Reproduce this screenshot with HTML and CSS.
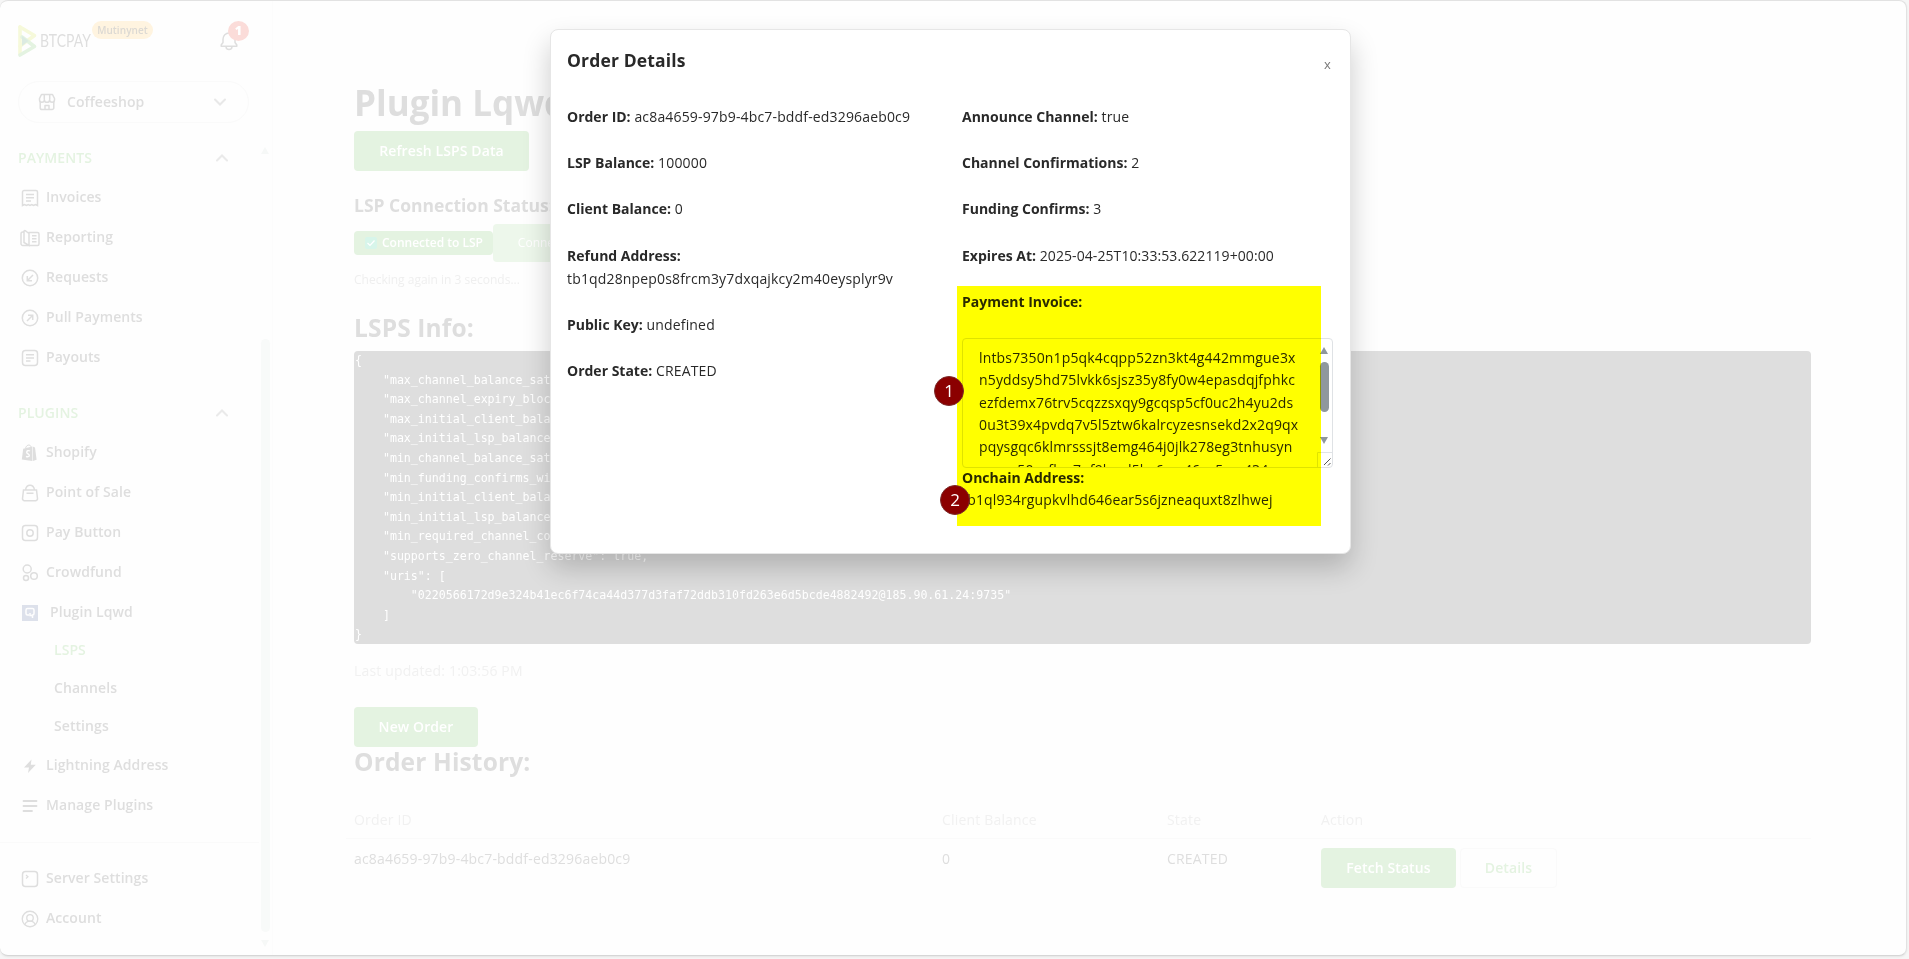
FILE: index.html
```
<!DOCTYPE html>
<html lang="en">
<head>
<meta charset="utf-8">
<title>Plugin Lqwd</title>
<link rel="stylesheet" href="styles.css">
</head>
<body>
<div class="window">
  <aside class="sidebar">
    <header class="brand">
      <svg class="logo" width="75" height="34" viewBox="0 0 75 34" fill="none">
        <path d="M2 3v27" stroke="#f6f9da" stroke-width="3.6" stroke-linecap="round"/>
        <path d="M2 3l14.5 8.500L2 22" stroke="#f6f9da" stroke-width="3.600" stroke-linecap="round" stroke-linejoin="round"/>
        <path d="M4 13l12.500 9.500L2 31" stroke="#e4f3e1" stroke-width="3.600" stroke-linecap="round" stroke-linejoin="round"/>
        <path d="M4 12v10l6.500-5z" fill="#dcebe2"/>
        <text class="logo-text" x="22" y="23.200" textLength="51" lengthAdjust="spacingAndGlyphs">BTCPAY</text>
      </svg>
      <span class="net">Mutinynet</span>
      <span class="bell">
        <svg width="18" height="20" viewBox="0 0 18 20" fill="none" stroke="#dedede" stroke-width="1.500" stroke-linejoin="round"><path d="M1.200 15.200V14L3 11.500V8a6 6 0 0 1 12 0v3.500l1.800 2.500v1.200z"/><path d="M6 15.500a3 3 0 0 0 6 0"/></svg>
        <b class="count">1</b>
      </span>
    </header>
    <div class="store">
      <svg width="18" height="18" viewBox="0 0 18 18" fill="none" stroke="#dedede" stroke-width="1.500" stroke-linejoin="round"><path d="M3.500 1.500h11l2 4v1.200a2.200 2.200 0 0 1-4.900 0 2.600 2.600 0 0 1-5.200 0 2.200 2.200 0 0 1-4.900 0V5.500z"/><path d="M6.300 1.500v5M11.700 1.500v5M2.200 8.500v6.200a1.800 1.800 0 0 0 1.800 1.800h10a1.800 1.800 0 0 0 1.800-1.800V8.500M7 16.500v-4h4v4"/></svg>
      <span>Coffeeshop</span>
      <svg class="chev" width="14" height="8" viewBox="0 0 14 8" fill="none" stroke="#e8e8e8" stroke-width="2" stroke-linecap="round"><path d="M2 1.500l5 5 5-5"/></svg>
    </div>
    <div class="menu">
      <div class="group first"><span>PAYMENTS</span><svg width="14" height="8" viewBox="0 0 14 8" fill="none" stroke="#eaeaea" stroke-width="2" stroke-linecap="round"><path d="M2 6.500l5-5 5 5"/></svg></div>
      <a class="item"><svg class="ic" viewBox="0 0 18 18"><path d="M1.500 16.500V3a1.500 1.500 0 0 1 1.500-1.500h12A1.500 1.500 0 0 1 16.500 3v13.500l-2-1-2 1-1.800-1-1.700 1-1.800-1-1.700 1-2-1zM5 5.500h8M5 8.700h8M5 12h5"/></svg>Invoices</a>
      <a class="item"><svg class="ic wide" viewBox="0 0 20 18"><path d="M9 16.500H3A1.800 1.800 0 0 1 1 14.700V4.800A1.800 1.800 0 0 1 2.800 3H4M4 3v10.500l5 3V4.500L5.200 1.600A.8.8 0 0 0 4 2.200zM9 16.500h8.500a1.500 1.500 0 0 0 1.500-1.500V5a1.500 1.500 0 0 0-1.500-1.500H8.500M12 6.700h4.500M12 9.700h4.500M12 12.700h4.500"/></svg>Reporting</a>
      <a class="item"><svg class="ic" viewBox="0 0 18 18"><circle cx="9" cy="9" r="7.700"/><path d="M12 6l-5.500 5.500M6.300 7v4.700H11"/></svg>Requests</a>
      <a class="item"><svg class="ic" viewBox="0 0 18 18"><circle cx="9" cy="9" r="7.700"/><path d="M6 12l5.500-5.500M7 6.300h4.700V11"/></svg>Pull Payments</a>
      <a class="item"><svg class="ic" viewBox="0 0 18 18"><rect x="1.500" y="1.500" width="15" height="15" rx="3"/><path d="M5 5.800h8M5 9h8M5 12h4.500"/></svg>Payouts</a>
      <div class="group"><span>PLUGINS</span><svg width="14" height="8" viewBox="0 0 14 8" fill="none" stroke="#eaeaea" stroke-width="2" stroke-linecap="round"><path d="M2 6.500l5-5 5 5"/></svg></div>
      <a class="item"><svg class="ic" viewBox="0 0 18 18"><path d="M2.200 4.800l9-2.300V17L.8 15.600zM11.800 2.600l2.200 1 1.600 12.200-3.800 1.100z" fill="#dedede" stroke="none"/><path d="M4.500 4.500C5 2 6.500 1 8 1s2 1.500 2 2.500" stroke-width="1"/><path d="M9 7c-1.500-.8-3.300-.2-3.300 1.200 0 1.600 2.600 1.600 2.600 3.200 0 1.400-1.700 1.700-3.300.9" stroke="#fefefe" stroke-width="1.400"/></svg>Shopify</a>
      <a class="item"><svg class="ic" viewBox="0 0 18 18"><path d="M2.500 6h13l1 8.500a2 2 0 0 1-2 2.200h-11a2 2 0 0 1-2-2.200zM4.500 6C5 3 6.800 1.300 9 1.300S13 3 13.500 6M5.500 9.200h7"/></svg>Point of Sale</a>
      <a class="item"><svg class="ic" viewBox="0 0 18 18"><rect x="1.500" y="1.500" width="15" height="15" rx="3"/><circle cx="9" cy="9" r="3.200"/></svg>Pay Button</a>
      <a class="item"><svg class="ic" viewBox="0 0 18 18"><circle cx="6.200" cy="5" r="4"/><circle cx="13" cy="12" r="3.300"/><circle cx="5" cy="14" r="2.500"/></svg>Crowdfund</a>
      <a class="item lq"><svg class="ic" viewBox="0 0 16 16"><path d="M0 0h16v16H0z" fill="#dde1eb" stroke="none"/><path d="M7 10H5.500A1.500 1.500 0 0 1 4 8.500V5a1.500 1.500 0 0 1 1.500-1.500h5A1.500 1.500 0 0 1 12 5v3.500a1.500 1.500 0 0 1-1.500 1.500V13M8 8v2.500h2.500" stroke="#fefefe" stroke-width="1.500"/></svg>Plugin Lqwd</a>
      <a class="sub on">LSPS</a>
      <a class="sub">Channels</a>
      <a class="sub">Settings</a>
      <a class="item"><svg class="ic" viewBox="0 0 18 18"><path d="M10.500 2.500L3 10.500h5L7 16l7.800-8.300H9.800z" fill="#dedede" stroke="none"/></svg>Lightning Address</a>
      <a class="item"><svg class="ic" viewBox="0 0 18 18"><path d="M2.500 4h13M2.500 9h13M2.500 14h8.500" stroke-width="1.800" stroke-linecap="round"/></svg>Manage Plugins</a>
    </div>
    <div class="foot">
      <a class="item"><svg class="ic" viewBox="0 0 18 18"><rect x="1.500" y="1.500" width="15" height="15" rx="3"/><path d="M5 5l2 1.700L5 8.500" stroke-width="1.200"/></svg>Server Settings</a>
      <a class="item"><svg class="ic wide" viewBox="0 0 20 20"><circle cx="10" cy="10" r="8.600"/><circle cx="10" cy="8.800" r="3.600"/><path d="M4.300 16.300c.8-2.600 3-3.900 5.700-3.900s4.900 1.300 5.700 3.900"/></svg>Account</a>
    </div>
    <div class="scroll"><i class="up"></i><i class="thumb"></i><i class="down"></i></div>
  </aside>
  <main class="main">
    <h1>Plugin Lqwd</h1>
    <button class="btn refresh">Refresh LSPS Data</button>
    <h4>LSP Connection Status:</h4>
    <div class="status">
      <span class="badge"><svg width="12" height="12" viewBox="0 0 12 12" fill="none"><rect width="12" height="12" rx="2" fill="#d7f5ea"/><path d="M2.500 6l2.500 2.500 4.500-5" stroke="#fff" stroke-width="1.200"/></svg><span>Connected to LSP</span></span>
      <button class="connect">Connect</button>
    </div>
    <p class="checking">Checking again in 3 seconds...</p>
    <h2>LSPS Info:</h2>
<pre class="info">{
    "max_channel_balance_sat
    "max_channel_expiry_bloc
    "max_initial_client_bala
    "max_initial_lsp_balance
    "min_channel_balance_sat
    "min_funding_confirms_wi
    "min_initial_client_bala
    "min_initial_lsp_balance
    "min_required_channel_co
    "supports_zero_channel_reserve": true,
    "uris": [
        "0220566172d9e324b41ec6f74ca44d377d3faf72ddb310fd263e6d5bcde4882492@185.90.61.24:9735"
    ]
}</pre>
    <p class="updated">Last updated: 1:03:56 PM</p>
    <button class="btn new">New Order</button>
    <h2 class="hist">Order History:</h2>
    <div class="table">
      <div class="row head"><span>Order ID</span><span>Client Balance</span><span>State</span><span>Action</span></div>
      <div class="row"><span>ac8a4659-97b9-4bc7-bddf-ed3296aeb0c9</span><span>0</span><span>CREATED</span><span class="acts"><button class="btn fetch">Fetch Status</button><button class="btn details">Details</button></span></div>
    </div>
  </main>
</div>

<section class="modal">
  <header class="modal-head"><h3>Order Details</h3><span class="close">x</span></header>
  <div class="cols">
    <div class="col">
      <p><b>Order ID:</b> ac8a4659-97b9-4bc7-bddf-ed3296aeb0c9</p>
      <p><b>LSP Balance:</b> 100000</p>
      <p><b>Client Balance:</b> 0</p>
      <p><b>Refund Address:</b><br>tb1qd28npep0s8frcm3y7dxqajkcy2m40eysplyr9v</p>
      <p><b>Public Key:</b> undefined</p>
      <p><b>Order State:</b> CREATED</p>
    </div>
    <div class="col">
      <p><b>Announce Channel:</b> true</p>
      <p><b>Channel Confirmations:</b> 2</p>
      <p><b>Funding Confirms:</b> 3</p>
      <p class="date"><b>Expires At:</b> 2025-04-25T10:33:53.622119+00:00</p>
      <p class="inv-label"><b>Payment Invoice:</b></p>
      <div class="area">
        <div class="invoice">lntbs7350n1p5qk4cqpp52zn3kt4g442mmgue3x<br>n5yddsy5hd75lvkk6sjsz35y8fy0w4epasdqjfphkc<br>ezfdemx76trv5cqzzsxqy9gcqsp5cf0uc2h4yu2ds<br>0u3t39x4pvdq7v5l5ztw6kalrcyzesnsekd2x2q9qx<br>pqysgqc6klmrsssjt8emg464j0jlk278eg3tnhusyn<br>uyzga50gcfhw7qf9kzrd5hy6ms46ya5zcc434awm</div>
        <div class="bar"><i class="up"></i><i class="thumb"></i><i class="down"></i>
          <svg class="grip" width="15" height="15" viewBox="0 0 15 15" fill="none"><path d="M.5 15V.5H15" stroke="#e0e3e6"/><path d="M7 13l6.500-6.500M11 13.500l2.500-2.500" stroke="#555"/></svg>
        </div>
      </div>
      <p class="onchain"><b>Onchain Address:</b><br>tb1ql934rgupkvlhd646ear5s6jzneaquxt8zlhwej</p>
    </div>
  </div>
</section>
<div class="highlight"></div>
<span class="pin one">1</span>
<span class="pin two">2</span>
</body>
</html>
```
FILE: styles.css
```
* { box-sizing: border-box; }
body { margin: 0; width: 1909px; height: 959px; overflow: hidden; background: #f6f6f6; font-family: "Open Sans", "Noto Sans", sans-serif; font-size: 14px; line-height: 22px; color: #dedede; }
h1, h2, h3, h4, p, pre { margin: 0; }
button { font: inherit; letter-spacing: inherit; padding: 0; border: 0; display: block; }
.window { width: 1907px; height: 956px; display: flex; background: #fefefe; border: 1px solid #e2e2e2; border-left: 0; border-bottom-color: #d6d6d6; border-radius: 8px; overflow: hidden; box-shadow: 0 1px 2px #e4e4e4; }

.sidebar { position: relative; width: 273px; flex: none; display: flex; flex-direction: column; border-right: 1px solid #fcfcfc; font-weight: 600; letter-spacing: .07px; }
.brand { display: flex; height: 80px; padding: 22px 0 0 18px; }
.logo { margin-top: 1px; flex: none; overflow: visible; }
.logo-text { font-family: Lato, sans-serif; font-weight: 400; font-size: 16.500px; fill: #dedede; }
.net { margin: -2px 0 0 -1px; width: 61px; height: 18px; border-radius: 9px; background: #fff4e0; color: #dcd9d3; font-size: 10px; line-height: 18px; text-align: center; font-weight: 600; }
.bell { position: relative; margin: 8px 0 0 67px; }
.count { position: absolute; left: 8px; top: -10px; width: 21px; height: 20px; border-radius: 50%; background: #fbdcd9; color: #fff; font-size: 12.500px; line-height: 19px; text-align: center; }
.store { margin: 0 0 0 18px; width: 231px; height: 42px; border: 1px solid #fafafa; border-radius: 21px; display: flex; align-items: center; padding: 0 21px 0 19px; }
.store span { margin-left: 11px; flex: 1; }
.menu { padding-left: 18px; height: 719px; }
.group { display: flex; justify-content: space-between; align-items: center; width: 211px; height: 38px; color: #e4f3e1; margin-top: 17px; font-weight: 600; }
.group.first { margin-top: 16px; }
.item { display: flex; align-items: center; height: 40px; }
.ic { width: 18px; height: 18px; margin: 2px 7px 0 3px; fill: none; stroke: #dedede; stroke-width: 1.500; flex: none; }
.ic.wide { width: 20px; margin: 2px 6px 0 2px; }
.item.lq { height: 39px; }
.lq .ic { width: 16px; height: 16px; margin: 2px 12px 0 4px; }
.sub { display: flex; align-items: center; height: 38px; padding-left: 36px; }
.sub.on { color: #e4f3e1; }
.foot { position: relative; padding: 15px 0 0 18px; width: 259px; border-top: 1px solid #fafafa; }
.scroll { position: absolute; left: 261px; top: 146px; height: 800px; width: 9px; display: flex; flex-direction: column; justify-content: space-between; }
.up, .down { width: 0; height: 0; border: 4.500px solid transparent; }
.up { border-top: 0; border-bottom: 7px solid #f6f8f7; }
.down { border-bottom: 0; border-top: 7px solid #f6f8f7; }
.scroll .thumb { height: 593px; margin-top: 177px; border-radius: 5px; background: #f8faf9; }

.main { padding: 79px 0 0 81px; width: 1538px; }
h1 { font-size: 35px; line-height: 46px; font-weight: 700; margin-bottom: 5px; white-space: nowrap; }
.btn { height: 40px; border-radius: 4px; background: #e4f3e1; color: #fff; font-weight: 600; letter-spacing: .1px; }
.refresh { width: 175px; }
h4 { font-size: 17.500px; line-height: 24px; font-weight: 700; margin-top: 22px; }
.status { display: flex; height: 38px; margin-top: 7px; align-items: center; }
.badge { width: 139px; height: 24px; border-radius: 4px; background: #e4f3e1; color: #fff; font-size: 12px; font-weight: 600; display: flex; align-items: center; gap: 5px; padding-left: 11px; }
.connect { width: 96px; height: 38px; border-radius: 4px; background: #edf7eb; color: #fff; font-size: 12px; }
.checking { font-size: 12px; line-height: 20px; margin-top: 8px; color: #efefef; }
h2 { font-size: 24.500px; line-height: 32px; font-weight: 700; margin-top: 22px; letter-spacing: .15px; }
.info { margin-top: 7px; width: 1457px; height: 293px; border-radius: 4px; background: #dedede; color: #fff; font-family: "DejaVu Sans Mono", monospace; font-size: 11.600px; line-height: 19.600px; padding-left: 1px; overflow: hidden; }
.updated { margin-top: 16px; color: #f1f1f1; letter-spacing: .17px; }
.new { width: 124px; margin-top: 25px; }
.hist { margin-top: -1px; }
.table { margin: 31px 0 0 -8px; width: 1465px; letter-spacing: .18px; }
.row { display: grid; grid-template-columns: 588px 225px 154px 1fr; padding: 9px 0 0 8px; }
.head { height: 30px; padding-top: 0; color: #f1f1f1; border-bottom: 1px solid #fafafa; }
.acts { display: flex; gap: 4px; }
.fetch { width: 135px; }
.details { width: 97px; background: #fefefe; border: 1px solid #fafafa; color: #e4f3e1; }

.modal { position: absolute; left: 550px; top: 29px; width: 801px; height: 525px; background: #fff; color: #292929; border: 1px solid #e6e6e6; border-radius: 8px; box-shadow: 0 14px 28px rgba(0, 0, 0, .2); padding: 16px 16px 0; line-height: 23.100px; letter-spacing: .16px; }
.modal-head { display: flex; justify-content: space-between; height: 59px; }
h3 { font-size: 17.500px; line-height: 28px; font-weight: 700; }
.close { font-size: 13px; color: #777; margin: 7px 3px 0 0; }
.cols { display: flex; }
.col { width: 395px; flex: none; }
.col b { letter-spacing: 0; }
.col p { margin-bottom: 23.100px; white-space: nowrap; }
.col .date { letter-spacing: .08px; }
.col .inv-label { margin-bottom: 25px; }
.area { display: flex; width: 371px; height: 130px; border: 1px solid #dfe2e5; border-radius: 4px; overflow: hidden; padding-left: 16px; justify-content: space-between; }
.invoice { padding-top: 8px; line-height: 22.400px; white-space: nowrap; }
.bar { width: 15px; padding: 8px 0 0 3px; flex: none; }
.bar .up { display: block; border-bottom-color: #8f979d; }
.bar .thumb { display: block; width: 9px; height: 50px; margin: 8px 0 25px; border-radius: 5px; background: #8f979d; }
.bar .down { display: block; border-top-color: #8f979d; }
.bar .grip { display: block; margin: 8px 0 0 -3px; }
.col .onchain { margin-top: -1px; line-height: 22.500px; }
.highlight { position: absolute; left: 957px; top: 286px; width: 364px; height: 240px; background: #ff0; mix-blend-mode: multiply; }
.pin { position: absolute; width: 30px; height: 30px; border-radius: 50%; background: #8b0000; border: 1px solid #7b2a2a; color: #fff; font-size: 17px; line-height: 27px; text-align: center; }
.one { left: 934px; top: 376px; }
.two { left: 940px; top: 485px; }
```
